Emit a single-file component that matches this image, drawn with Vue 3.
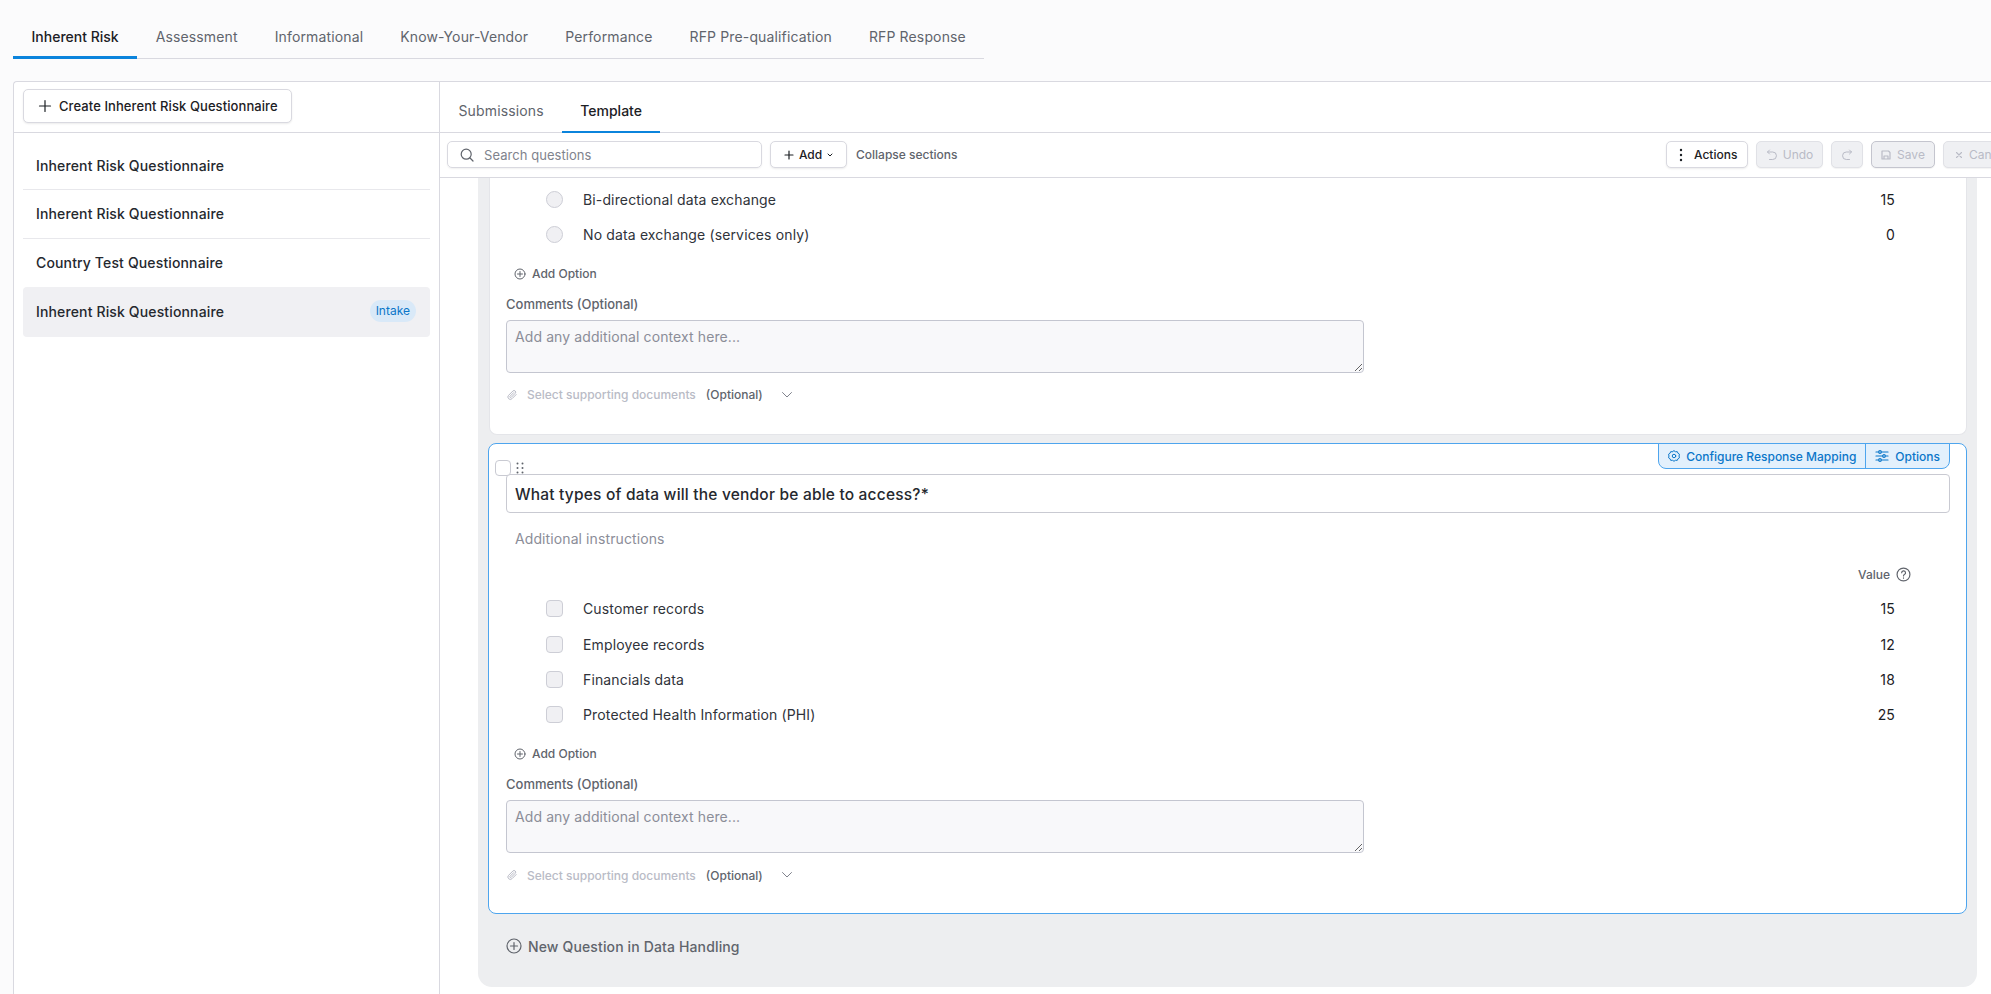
<template>
  <div class="page">
    <!-- top tabs -->
    <div class="top-tabs">
      <div
        v-for="(tab, i) in topTabs"
        :key="tab"
        class="top-tab"
        :class="{ active: i === 0 }"
      >
        {{ tab }}
      </div>
    </div>

    <div class="panel">
      <!-- questionnaire list -->
      <aside class="side">
        <div class="side-head">
          <button class="create-btn">
            <svg class="ico-14" viewBox="0 0 14 14"><path d="M7 1.500v11M1.500 7h11" /></svg>
            Create Inherent Risk Questionnaire
          </button>
        </div>
        <div class="side-list">
          <div
            v-for="(item, i) in questionnaires"
            :key="i"
            class="side-item"
            :class="{ selected: item.badge, plain: i === 2 }"
          >
            <span>{{ item.name }}</span>
            <span v-if="item.badge" class="badge">{{ item.badge }}</span>
          </div>
        </div>
      </aside>

      <main class="main">
        <div class="sub-tabs">
          <div class="sub-tab">Submissions</div>
          <div class="sub-tab active">Template</div>
        </div>

        <!-- toolbar -->
        <div class="toolbar">
          <label class="search">
            <svg class="ico-14 search-ico" viewBox="0 0 14 14">
              <circle cx="6.200" cy="6.200" r="5" />
              <path d="M10 10l3 3" />
            </svg>
            <input type="text" placeholder="Search questions" />
          </label>
          <button class="tool-btn add-btn">
            <svg class="ico-10" viewBox="0 0 10 10"><path d="M5 1v8M1 5h8" /></svg>
            Add
            <svg class="ico-6" viewBox="0 0 6 6"><path d="M1 2l2 2 2-2" /></svg>
          </button>
          <span class="collapse">Collapse sections</span>

          <div class="tool-right">
            <button class="tool-btn actions-btn">
              <svg class="dots" viewBox="0 0 4 14">
                <circle cx="2" cy="2" r="1.200" />
                <circle cx="2" cy="7" r="1.200" />
                <circle cx="2" cy="12" r="1.200" />
              </svg>
              Actions
            </button>
            <button class="tool-btn off undo-btn">
              <svg class="ico-12" viewBox="0 0 12 12">
                <path d="M3.500 1L1.500 3l2 2M1.500 3h5.200a3.500 3.500 0 0 1 0 7.500H3.500" />
              </svg>
              Undo
            </button>
            <button class="tool-btn off redo-btn">
              <svg class="ico-12" viewBox="0 0 12 12">
                <path d="M8.500 1l2 2-2 2M10.500 3H5.300a3.500 3.500 0 0 0 0 7.500h3.200" />
              </svg>
            </button>
            <button class="tool-btn off save-btn">
              <svg class="ico-10" viewBox="0 0 10 10">
                <path d="M1 1h6.500L9 2.500V9H1zM3 9V6h4v3" />
              </svg>
              Save
            </button>
            <button class="tool-btn off cancel-btn">
              <svg class="ico-8" viewBox="0 0 8 8"><path d="M1.500 1.500l5 5M6.500 1.500l-5 5" /></svg>
              Cancel
            </button>
          </div>
        </div>

        <div class="scroller">
          <section class="section">
            <!-- question scrolled partly out of view -->
            <div class="card card-cut">
              <div v-for="opt in radioOptions" :key="opt.label" class="option">
                <span class="radio"></span>
                <span class="option-label">{{ opt.label }}</span>
                <span class="option-value">{{ opt.value }}</span>
              </div>
              <div class="add-option">
                <svg class="ico-12" viewBox="0 0 12 12">
                  <circle cx="6" cy="6" r="5" />
                  <path d="M6 3.500v5M3.500 6h5" />
                </svg>
                Add Option
              </div>
              <div class="comments-label">Comments (Optional)</div>
              <textarea class="comments" placeholder="Add any additional context here..."></textarea>
              <div class="support">
                <svg class="clip" viewBox="0 0 12 12">
                  <path d="M10.200 5.500L6 9.700a2.400 2.400 0 0 1-3.400-3.400l4.300-4.300a1.600 1.600 0 0 1 2.300 2.300L5 8.500a.8.8 0 0 1-1.100-1.100l3.800-3.800" />
                </svg>
                <span class="support-text">Select supporting documents</span>
                <span class="support-opt">(Optional)</span>
                <svg class="chev" viewBox="0 0 12 8"><path d="M1.500 1.500L6 6l4.500-4.500" /></svg>
              </div>
            </div>

            <!-- selected question -->
            <div class="card card-active">
              <div class="card-actions">
                <button class="map-btn">
                  <svg class="gear" viewBox="0 0 24 24">
                    <path d="M12 1.500l3 2 3.600-.2 1.400 3.300 3 2-1 3.400 1 3.400-3 2-1.400 3.300-3.600-.2-3 2-3-2-3.600.2L4 17.400l-3-2 1-3.400-1-3.400 3-2 1.400-3.300 3.600.2z" />
                    <circle cx="12" cy="12" r="3.500" />
                  </svg>
                  Configure Response Mapping
                </button>
                <button class="map-btn">
                  <svg class="ico-14" viewBox="0 0 14 14">
                    <path d="M1 3h12M1 7h12M1 11h12" />
                    <circle class="knob" cx="5" cy="3" r="1.300" />
                    <circle class="knob" cx="9" cy="7" r="1.300" />
                    <circle class="knob" cx="5" cy="11" r="1.300" />
                  </svg>
                  Options
                </button>
              </div>
              <span class="select-box"></span>
              <svg class="grip" viewBox="0 0 8 12">
                <circle cx="1.500" cy="1.500" r="1" />
                <circle cx="6.500" cy="1.500" r="1" />
                <circle cx="1.500" cy="6" r="1" />
                <circle cx="6.500" cy="6" r="1" />
                <circle cx="1.500" cy="10.500" r="1" />
                <circle cx="6.500" cy="10.500" r="1" />
              </svg>

              <input
                class="question"
                type="text"
                value="What types of data will the vendor be able to access?*"
              />
              <input class="instructions" type="text" placeholder="Additional instructions" />

              <div class="value-head">
                Value
                <svg class="help" viewBox="0 0 14 14">
                  <circle cx="7" cy="7" r="6" />
                  <path d="M5.300 5.400a1.800 1.800 0 1 1 2.600 1.600c-.6.3-.9.7-.9 1.300M7 10.200v.2" />
                </svg>
              </div>

              <div v-for="opt in checkOptions" :key="opt.label" class="option">
                <span class="checkbox"></span>
                <span class="option-label">{{ opt.label }}</span>
                <span class="option-value">{{ opt.value }}</span>
              </div>

              <div class="add-option">
                <svg class="ico-12" viewBox="0 0 12 12">
                  <circle cx="6" cy="6" r="5" />
                  <path d="M6 3.500v5M3.500 6h5" />
                </svg>
                Add Option
              </div>
              <div class="comments-label lower">Comments (Optional)</div>
              <textarea class="comments" placeholder="Add any additional context here..."></textarea>
              <div class="support">
                <svg class="clip" viewBox="0 0 12 12">
                  <path d="M10.200 5.500L6 9.700a2.400 2.400 0 0 1-3.400-3.400l4.300-4.300a1.600 1.600 0 0 1 2.300 2.300L5 8.500a.8.8 0 0 1-1.100-1.100l3.800-3.800" />
                </svg>
                <span class="support-text">Select supporting documents</span>
                <span class="support-opt">(Optional)</span>
                <svg class="chev" viewBox="0 0 12 8"><path d="M1.500 1.500L6 6l4.500-4.500" /></svg>
              </div>
            </div>

            <div class="new-question">
              <svg class="new-ico" viewBox="0 0 16 16">
                <circle cx="8" cy="8" r="7" />
                <path d="M8 4.500v7M4.500 8h7" />
              </svg>
              New Question in Data Handling
            </div>
          </section>
        </div>
      </main>
    </div>
  </div>
</template>

<script setup>
const topTabs = [
  "Inherent Risk",
  "Assessment",
  "Informational",
  "Know-Your-Vendor",
  "Performance",
  "RFP Pre-qualification",
  "RFP Response",
];

const questionnaires = [
  { name: "Inherent Risk Questionnaire" },
  { name: "Inherent Risk Questionnaire" },
  { name: "Country Test Questionnaire" },
  { name: "Inherent Risk Questionnaire", badge: "Intake" },
];

const radioOptions = [
  { label: "Bi-directional data exchange", value: 15 },
  { label: "No data exchange (services only)", value: 0 },
];

const checkOptions = [
  { label: "Customer records", value: 15 },
  { label: "Employee records", value: 12 },
  { label: "Financials data", value: 18 },
  { label: "Protected Health Information (PHI)", value: 25 },
];
</script>

<style>
html,
body {
  margin: 0;
  background: #fff;
}
</style>

<style scoped>
* {
  box-sizing: border-box;
}

svg {
  fill: none;
  stroke: currentColor;
  stroke-linecap: round;
  stroke-linejoin: round;
  flex-shrink: 0;
}

button,
input,
textarea {
  font-family: inherit;
  letter-spacing: inherit;
}

.page {
  height: 994px;
  overflow: hidden;
  padding: 17px 0 0 13px;
  background: #fbfbfc;
  font-family: Inter, "Liberation Sans", sans-serif;
  color: #1c2024;
}

.ico-14 {
  width: 14px;
  height: 14px;
  stroke-width: 1.200;
}

.ico-12 {
  width: 12px;
  height: 12px;
  stroke-width: 1;
}

.ico-10 {
  width: 10px;
  height: 10px;
  stroke-width: 1.200;
}

.ico-8 {
  width: 8px;
  height: 8px;
  stroke-width: 1.100;
}

.ico-6 {
  width: 6px;
  height: 6px;
  stroke-width: 1;
}

/* top tabs */
.top-tabs {
  display: flex;
  width: 971px;
  height: 42px;
  border-bottom: 1px solid #d9d9e0;
}

.top-tab {
  flex-shrink: 0;
  height: 42px;
  padding: 11px 18.500px 0;
  font-size: 14px;
  line-height: 17px;
  letter-spacing: 0.14px;
  white-space: nowrap;
  color: #60646c;
  border-bottom: 3px solid transparent;
}

.top-tab.active {
  color: #1c2024;
  font-weight: 500;
  letter-spacing: 0;
  border-bottom-color: #0b84dc;
}

/* panel */
.panel {
  display: flex;
  height: 913px;
  margin-top: 22px;
  background: #fff;
  border-top: 1px solid #d9d9e0;
  border-left: 1px solid #d9d9e0;
  border-top-left-radius: 4px;
}

.side {
  width: 426px;
  flex-shrink: 0;
  border-right: 1px solid #d9d9e0;
}

.side-head {
  height: 51px;
  padding: 7px 9px 0;
  border-bottom: 1px solid #d9d9e0;
}

.create-btn {
  display: flex;
  align-items: center;
  gap: 7px;
  width: 269px;
  height: 34px;
  padding: 0 12px 0 14px;
  background: #fff;
  border: 1px solid #d9d9e0;
  border-radius: 5px;
  box-shadow: 0 1px 2px rgba(0, 0, 0, 0.08);
  font-size: 13px;
  font-weight: 500;
  letter-spacing: 0.08px;
  white-space: nowrap;
  color: #1c2024;
}

.side-list {
  padding: 8px 9px 0;
}

.side-item {
  display: flex;
  align-items: center;
  justify-content: space-between;
  height: 49px;
  padding: 0 13px 1px;
  font-size: 14px;
  font-weight: 500;
  letter-spacing: 0.14px;
  color: #25282e;
  border-bottom: 1px solid #e8e8ec;
}

.side-item:first-child {
  padding: 1px 13px 0;
}

.side-item.plain {
  height: 48px;
  border-bottom: 0;
}

.side-item.selected {
  height: 50px;
  padding: 0 14px 2px 13px;
  background: #f0f0f3;
  border-bottom: 0;
  border-radius: 4px;
}

.badge {
  padding: 3px 6px;
  font-size: 12px;
  line-height: 16px;
  font-weight: 400;
  letter-spacing: 0;
  color: #0b76c9;
  background: #d9e9f8;
  border-radius: 11px;
}

/* main column */
.main {
  flex: 1;
  min-width: 0;
  display: flex;
  flex-direction: column;
}

.sub-tabs {
  display: flex;
  align-items: flex-end;
  height: 51px;
  border-bottom: 1px solid #d9d9e0;
}

.sub-tab {
  height: 38px;
  padding: 6px 18px 0 18.500px;
  margin-bottom: -1px;
  font-size: 14px;
  line-height: 20px;
  letter-spacing: 0.14px;
  color: #60646c;
  border-bottom: 2.500px solid transparent;
}

.sub-tab.active {
  font-weight: 500;
  letter-spacing: 0;
  color: #1c2024;
  border-bottom-color: #0b84dc;
}

.toolbar {
  display: flex;
  align-items: center;
  height: 45px;
  padding: 0 8px 1px 7px;
  overflow: hidden;
  border-bottom: 1px solid #d9d9e0;
}

.search {
  display: flex;
  align-items: center;
  gap: 10px;
  width: 315px;
  height: 27px;
  padding: 0 12px;
  border: 1px solid #d9d9e0;
  border-radius: 5px;
  box-shadow: 0 1px 2px rgba(0, 0, 0, 0.06);
  color: #60646c;
}

.search input {
  flex: 1;
  min-width: 0;
  border: 0;
  outline: 0;
  padding: 0;
  font-size: 13px;
  letter-spacing: 0.05px;
  background: transparent;
  color: #1c2024;
}

.search input::placeholder {
  color: #80838d;
}

.tool-btn {
  display: inline-flex;
  align-items: center;
  justify-content: center;
  height: 27px;
  background: #fff;
  border: 1px solid #d9d9e0;
  border-radius: 5px;
  box-shadow: 0 1px 2px rgba(0, 0, 0, 0.08);
  font-size: 12px;
  font-weight: 500;
  color: #1c2024;
}

.add-btn {
  width: 77px;
  margin-left: 8px;
  gap: 5px;
}

.collapse {
  margin-left: 9px;
  font-size: 12px;
  font-weight: 500;
  color: #60646c;
}

.tool-right {
  display: flex;
  flex-shrink: 0;
  gap: 8px;
  margin-left: auto;
  margin-right: -40px;
}

.actions-btn {
  width: 82px;
  gap: 11px;
  justify-content: flex-start;
  padding-left: 12px;
}

.dots {
  width: 4px;
  height: 14px;
  fill: #1c2024;
  stroke: none;
}

.off {
  background: #eff0f3;
  border-color: #e0e1e6;
  color: #b9bbc6;
  box-shadow: 0 1px 1px rgba(0, 0, 0, 0.05);
  font-weight: 400;
}

.undo-btn {
  width: 67px;
  gap: 5px;
}

.redo-btn {
  width: 32px;
}

.save-btn {
  width: 64px;
  gap: 6px;
  border-color: #c4c5ce;
}

.cancel-btn {
  width: 80px;
  gap: 6px;
  justify-content: flex-start;
  padding-left: 11px;
}

/* questions */
.scroller {
  flex: 1;
  min-height: 0;
  padding: 0 14px 0 38px;
}

.section {
  height: 809px;
  padding: 0 10px 0 11px;
  background: #edeef0;
  border-radius: 0 0 14px 14px;
}

.card {
  position: relative;
  padding: 0 16px;
  background: #fff;
  border: 1px solid #e4e5e9;
  border-radius: 8px;
}

.card-cut {
  height: 257px;
  padding-top: 4px;
  border-top: 0;
  border-radius: 0 0 8px 8px;
}

.card-active {
  height: 471px;
  margin-top: 8px;
  margin-left: -1px;
  padding: 30px 16px 0 17px;
  border-color: #4ea5ee;
}

.card-actions {
  position: absolute;
  top: -1px;
  right: 16px;
  display: flex;
  height: 26px;
  background: #e3f0fc;
  border: 1px solid #4ea5ee;
  border-radius: 0 0 8px 8px;
}

.map-btn {
  display: flex;
  align-items: center;
  gap: 6px;
  height: 100%;
  padding: 0 9px;
  background: transparent;
  border: 0;
  font-size: 12px;
  font-weight: 500;
  white-space: nowrap;
  color: #0b76c9;
}

.map-btn + .map-btn {
  border-left: 1px solid #4ea5ee;
}

.gear {
  width: 12px;
  height: 12px;
  stroke-width: 2;
}

.knob {
  fill: #e3f0fc;
}

.select-box {
  position: absolute;
  top: 16px;
  left: 6px;
  width: 16px;
  height: 16px;
  background: #fff;
  border: 1px solid #c9cad2;
  border-radius: 4px;
}

.grip {
  position: absolute;
  top: 18px;
  left: 27px;
  width: 8px;
  height: 12px;
  fill: #60646c;
  stroke: none;
}

.question {
  display: block;
  width: 100%;
  height: 39px;
  padding: 1px 8px 0;
  border: 1px solid #c9cad2;
  border-radius: 4px;
  outline: 0;
  font-size: 15.500px;
  font-weight: 500;
  letter-spacing: 0.2px;
  color: #25282e;
  background: #fff;
}

.instructions {
  display: block;
  width: 100%;
  height: 28px;
  margin-top: 11px;
  padding: 0 9px;
  border: 0;
  outline: 0;
  font-size: 14px;
  letter-spacing: 0.1px;
  background: transparent;
}

.instructions::placeholder {
  color: #8b8d98;
}

.value-head {
  display: flex;
  align-items: center;
  justify-content: flex-end;
  gap: 6px;
  height: 22px;
  margin-top: 11px;
  margin-bottom: 6.200px;
  padding-right: 39px;
  font-size: 12px;
  font-weight: 500;
  color: #60646c;
}

.help {
  width: 15px;
  height: 15px;
  stroke-width: 1.100;
}

.option {
  display: flex;
  align-items: center;
  height: 35.330px;
  padding: 0 55px 0 40px;
  font-size: 14px;
  letter-spacing: 0.14px;
  color: #30333a;
}

.radio,
.checkbox {
  width: 17px;
  height: 17px;
  flex-shrink: 0;
  background: #f0f0f3;
  border: 1px solid #cdced6;
}

.radio {
  border-radius: 50%;
}

.checkbox {
  border-radius: 4px;
}

.option-label {
  flex: 1;
  margin-left: 20px;
}

.option-value {
  color: #1c2024;
}

.add-option {
  display: flex;
  align-items: center;
  gap: 6px;
  height: 24px;
  margin-top: 9px;
  padding-left: 8px;
  font-size: 12px;
  font-weight: 500;
  color: #60646c;
}

.comments-label {
  height: 18px;
  margin-top: 9px;
  font-size: 13px;
  line-height: 18px;
  font-weight: 500;
  color: #60646c;
}

.comments-label.lower {
  margin-top: 9.500px;
}

.comments {
  display: block;
  width: 858px;
  height: 53px;
  margin-top: 7px;
  padding: 6px 8px;
  background: #f8f8fa;
  border: 1px solid #c4c6d0;
  border-radius: 4px;
  outline: 0;
  resize: vertical;
  font-size: 14px;
  letter-spacing: 0.1px;
  line-height: 20px;
}

.comments::placeholder {
  color: #8b8d98;
}

.support {
  display: flex;
  align-items: center;
  height: 20px;
  margin-top: 12px;
  font-size: 12px;
  font-weight: 500;
}

.clip {
  width: 12px;
  height: 12px;
  stroke-width: 1;
  color: #b9bbc6;
}

.support-text {
  margin-left: 9px;
  color: #b9bbc6;
}

.support-opt {
  margin-left: 10px;
  color: #60646c;
}

.chev {
  width: 12px;
  height: 8px;
  margin-left: 18px;
  stroke-width: 1;
  color: #80838d;
}

.new-question {
  display: flex;
  align-items: center;
  gap: 6px;
  height: 24px;
  margin-top: 20px;
  padding-left: 17px;
  font-size: 14px;
  font-weight: 500;
  letter-spacing: 0.14px;
  color: #60646c;
}

.new-ico {
  width: 16px;
  height: 16px;
  stroke-width: 1.200;
}
</style>
